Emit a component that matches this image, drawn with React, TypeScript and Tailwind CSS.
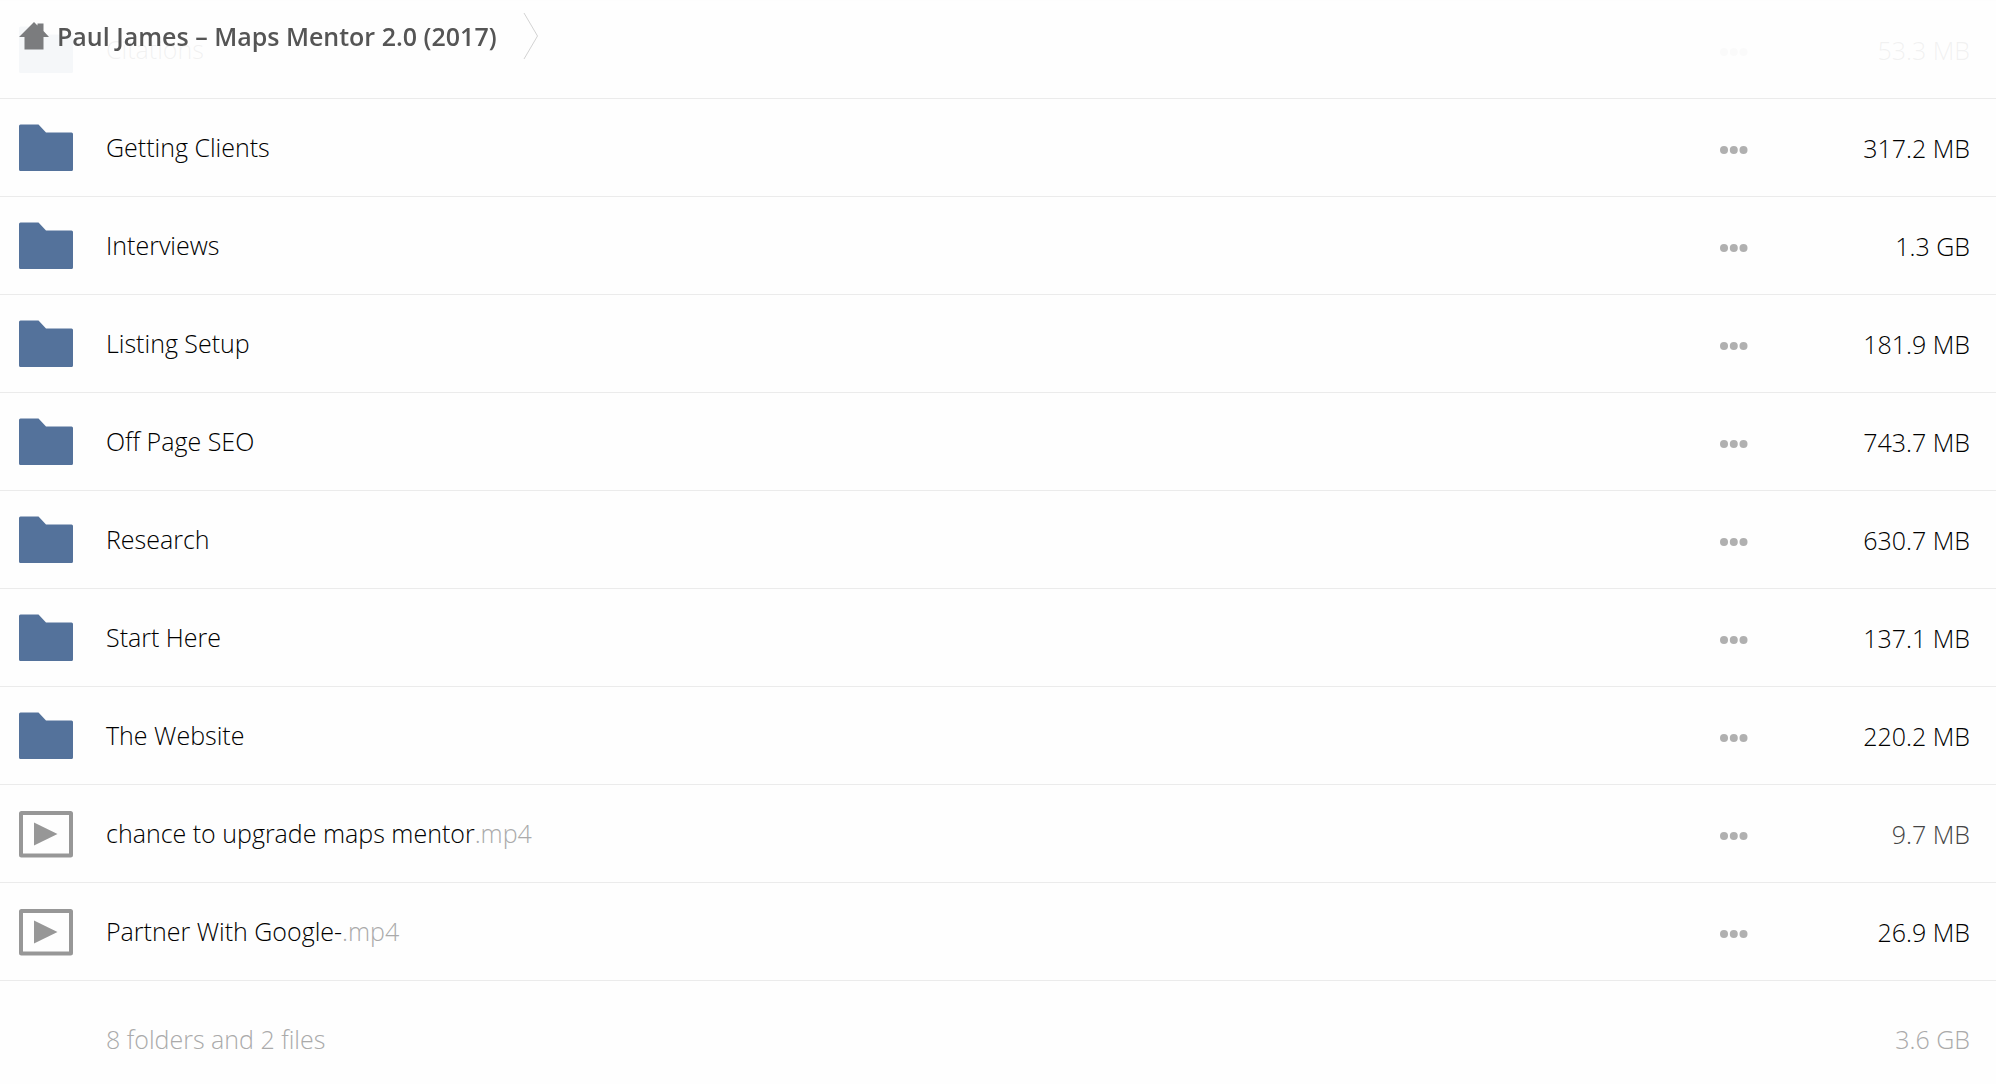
import { clsx } from 'clsx';

type Entry = {
  name: string;
  ext?: string;
  size: string;
  kind: 'folder' | 'video';
  small?: boolean;
};

const entries: Entry[] = [
  { name: 'Citations', size: '53.3 MB', kind: 'folder' },
  { name: 'Getting Clients', size: '317.2 MB', kind: 'folder' },
  { name: 'Interviews', size: '1.3 GB', kind: 'folder' },
  { name: 'Listing Setup', size: '181.9 MB', kind: 'folder' },
  { name: 'Off Page SEO', size: '743.7 MB', kind: 'folder' },
  { name: 'Research', size: '630.7 MB', kind: 'folder' },
  { name: 'Start Here', size: '137.1 MB', kind: 'folder' },
  { name: 'The Website', size: '220.2 MB', kind: 'folder' },
  { name: 'chance to upgrade maps mentor', ext: '.mp4', size: '9.7 MB', kind: 'video', small: true },
  { name: 'Partner With Google-', ext: '.mp4', size: '26.9 MB', kind: 'video' },
];

function FolderIcon() {
  return (
    <svg width="54" height="48" viewBox="0 0 54 48" fill="#54729b" aria-hidden="true">
      <path d="M1.5 0.5H19.5L27 8.5H52.5Q54 8.5 54 10V45.5Q54 47 52.5 47H1.5Q0 47 0 45.5V2Q0 0.5 1.5 0.5Z" />
    </svg>
  );
}

function VideoIcon() {
  return (
    <svg width="54" height="48" viewBox="0 0 54 48" aria-hidden="true">
      <rect x="2" y="3" width="50" height="42.5" rx="0.5" fill="none" stroke="#979797" strokeWidth="4" strokeLinejoin="round" />
      <path d="M15 12.5L38.5 24L15 35.5Z" fill="#979797" />
    </svg>
  );
}

function HomeIcon() {
  return (
    <svg width="30" height="28" viewBox="0 0 30 28" fill="#7b7c7e" aria-hidden="true">
      <path d="M15 0L18.5 3.5V1.5H24.5V9L30 15H24.5V27.5H5.5V15H0Z" />
    </svg>
  );
}

function DotsIcon() {
  return (
    <svg width="28" height="8" viewBox="0 0 28 8" fill="#b0b0b0" aria-hidden="true">
      <circle cx="4" cy="4" r="4" />
      <circle cx="13.8" cy="4" r="4" />
      <circle cx="23.5" cy="4" r="4" />
    </svg>
  );
}

function EntryRow({ entry }: { entry: Entry }) {
  return (
    <tr className="h-[98px] border-b border-[#ebebeb]">
      <td className="pl-[19px]">
        {entry.kind === 'folder' ? <FolderIcon /> : <VideoIcon />}
      </td>
      <td className="pb-[2px]">
        <a href="#" className="text-black">
          {entry.name}
          {entry.ext && <span className="text-[#aaa]">{entry.ext}</span>}
        </a>
      </td>
      <td className="pt-1">
        <button type="button" aria-label={`Options for ${entry.name}`} className="flex h-10 cursor-pointer items-center">
          <DotsIcon />
        </button>
      </td>
      <td className={clsx('pr-[26px] text-right', entry.small ? 'text-[#444]' : 'text-black')}>
        {entry.size}
      </td>
    </tr>
  );
}

export default function App() {
  return (
    <div className="min-h-screen bg-[#fefefe] font-['Open_Sans','Noto_Sans',sans-serif] text-[25px] leading-9 font-light">
      {/* Breadcrumb, stays over the list while it scrolls */}
      <header className="fixed inset-x-0 top-0 z-10 flex h-[97px] items-start bg-[#fefefe]/95">
        <nav aria-label="Breadcrumb" className="flex h-[72px] items-center gap-[26px] pl-[19px]">
          <a href="#" className="flex items-center gap-2 font-semibold text-[#555]">
            <HomeIcon />
            <span>Paul James – Maps Mentor 2.0 (2017)</span>
          </a>
          <svg width="16" height="48" viewBox="0 0 16 48" fill="none" stroke="#d2d2d2" aria-hidden="true">
            <path d="M1 1L14.5 24L1 47" />
          </svg>
        </nav>
      </header>

      <main>
        <table className="w-full table-fixed border-collapse border-t border-[#ebebeb]">
          <colgroup>
            <col className="w-[106px]" />
            <col />
            <col className="w-[100px]" />
            <col className="w-[176px]" />
          </colgroup>
          <tbody>
            {entries.map((entry) => (
              <EntryRow key={entry.name} entry={entry} />
            ))}
          </tbody>
          <tfoot>
            <tr className="text-[#aaa]">
              <td />
              <td className="pt-10 pb-5">8 folders and 2 files</td>
              <td />
              <td className="pt-10 pr-[26px] pb-5 text-right">3.6 GB</td>
            </tr>
          </tfoot>
        </table>
      </main>
    </div>
  );
}
